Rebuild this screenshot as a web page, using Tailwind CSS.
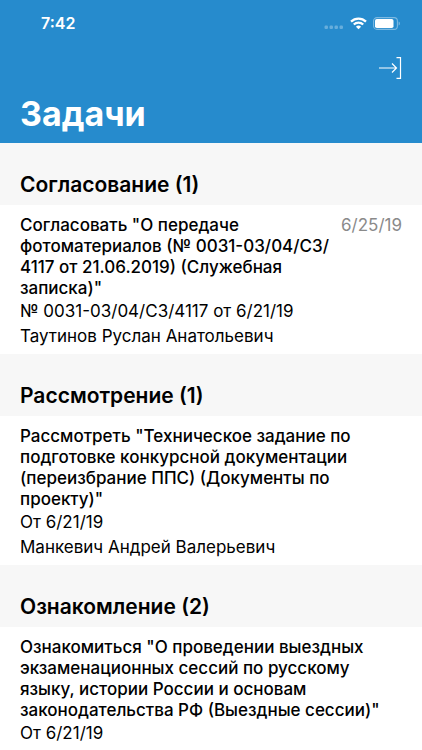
<!DOCTYPE html>
<html lang="ru">
<head>
    <meta charset="UTF-8">
    <meta name="viewport" content="width=device-width, initial-scale=1.0">
    <title>Задачи</title>
    <script src="https://cdn.jsdelivr.net/npm/@tailwindcss/browser@4"></script>
</head>
<body class="bg-white font-['Inter',sans-serif] text-black overflow-x-hidden">
    <!-- Header -->
    <header class="bg-[#268bcd] text-white">
        <!-- Status bar -->
        <div class="flex justify-between items-center h-[46px] pl-[41px] pr-[22px]">
            <div class="text-base font-semibold">7:42</div>
            <div class="flex items-center gap-[6px]">
                <svg class="w-[20px] h-[14px]" viewBox="0 0 20 14" fill="#fff" fill-opacity="0.3">
                    <rect x="0.500" y="9.500" width="3.500" height="3.500" rx="1.200"/>
                    <rect x="5.500" y="9.500" width="3.500" height="3.500" rx="1.200"/>
                    <rect x="10.500" y="9.500" width="3.500" height="3.500" rx="1.200"/>
                    <rect x="15.500" y="9.500" width="3.500" height="3.500" rx="1.200"/>
                </svg>
                <svg class="w-[17px] h-[13px]" viewBox="0 0 17 13" fill="none" stroke="#fff" stroke-width="2.300">
                    <path d="M1 4.600a10.800 10.800 0 0 1 15 0"/>
                    <path d="M3.800 7.500a6.800 6.800 0 0 1 9.400 0"/>
                    <path d="M8.500 12.300 5.900 9.700a3.700 3.700 0 0 1 5.200 0z" fill="#fff" stroke="none"/>
                </svg>
                <svg class="w-[27px] h-[13px]" viewBox="0 0 27 13" fill="none">
                    <rect x="0.600" y="0.600" width="23.800" height="11.800" rx="3.400" stroke="#fff" stroke-opacity="0.4" stroke-width="1.100"/>
                    <rect x="2" y="2" width="18.500" height="9" rx="1.800" fill="#fff"/>
                    <path d="M25.600 4.500v4c.8-.3 1.300-1.100 1.300-2s-.5-1.700-1.300-2z" fill="#fff" fill-opacity="0.4"/>
                </svg>
            </div>
        </div>
        <!-- Navigation bar -->
        <div class="flex justify-end items-center h-[43px] pr-5">
            <button type="button" aria-label="Выйти">
                <svg class="w-[24px] h-[24px]" viewBox="0 0 24 24" fill="none" stroke="#fff" stroke-width="1.200">
                    <path d="M1 12h17.500M14 7.500l4.500 4.500-4.500 4.500"/>
                    <path d="M18.500 1.700h4v20.600h-4"/>
                </svg>
            </button>
        </div>
        <h1 class="h-[54px] px-5 pt-1 text-[34px] leading-[42px] font-bold">Задачи</h1>
    </header>

    <!-- Task list -->
    <main>
        <section>
            <h2 class="bg-[#f7f7f7] px-5 pt-[29px] pb-[7px] text-[21px] leading-[26px] font-semibold">Согласование (1)</h2>
            <article class="px-5 pt-[10px] pb-[5px] text-[17px] leading-[25px]">
                <div class="flex justify-between gap-1">
                    <h3 class="leading-[21px] font-medium whitespace-nowrap">Согласовать "О передаче<br>фотоматериалов (№ 0031-03/04/СЗ/<br>4117 от 21.06.2019) (Служебная<br>записка)"</h3>
                    <time class="leading-[21px] text-[#8a8a8a]">6/25/19</time>
                </div>
                <p>№ 0031-03/04/СЗ/4117 от 6/21/19</p>
                <p>Таутинов Руслан Анатольевич</p>
            </article>
        </section>

        <section>
            <h2 class="bg-[#f7f7f7] px-5 pt-[29px] pb-[7px] text-[21px] leading-[26px] font-semibold">Рассмотрение (1)</h2>
            <article class="px-5 pt-[10px] pb-[5px] text-[17px] leading-[25px]">
                <h3 class="leading-[21px] font-medium">Рассмотреть "Техническое задание по<br>подготовке конкурсной документации<br>(переизбрание ППС) (Документы по<br>проекту)"</h3>
                <p>От 6/21/19</p>
                <p>Манкевич Андрей Валерьевич</p>
            </article>
        </section>

        <section>
            <h2 class="bg-[#f7f7f7] px-5 pt-[29px] pb-[7px] text-[21px] leading-[26px] font-semibold">Ознакомление (2)</h2>
            <article class="px-5 pt-[10px] text-[17px] leading-[25px]">
                <h3 class="leading-[21px] font-medium">Ознакомиться "О проведении выездных<br>экзаменационных сессий по русскому<br>языку, истории России и основам<br>законодательства РФ (Выездные сессии)"</h3>
                <p>От 6/21/19</p>
            </article>
        </section>
    </main>
</body>
</html>
